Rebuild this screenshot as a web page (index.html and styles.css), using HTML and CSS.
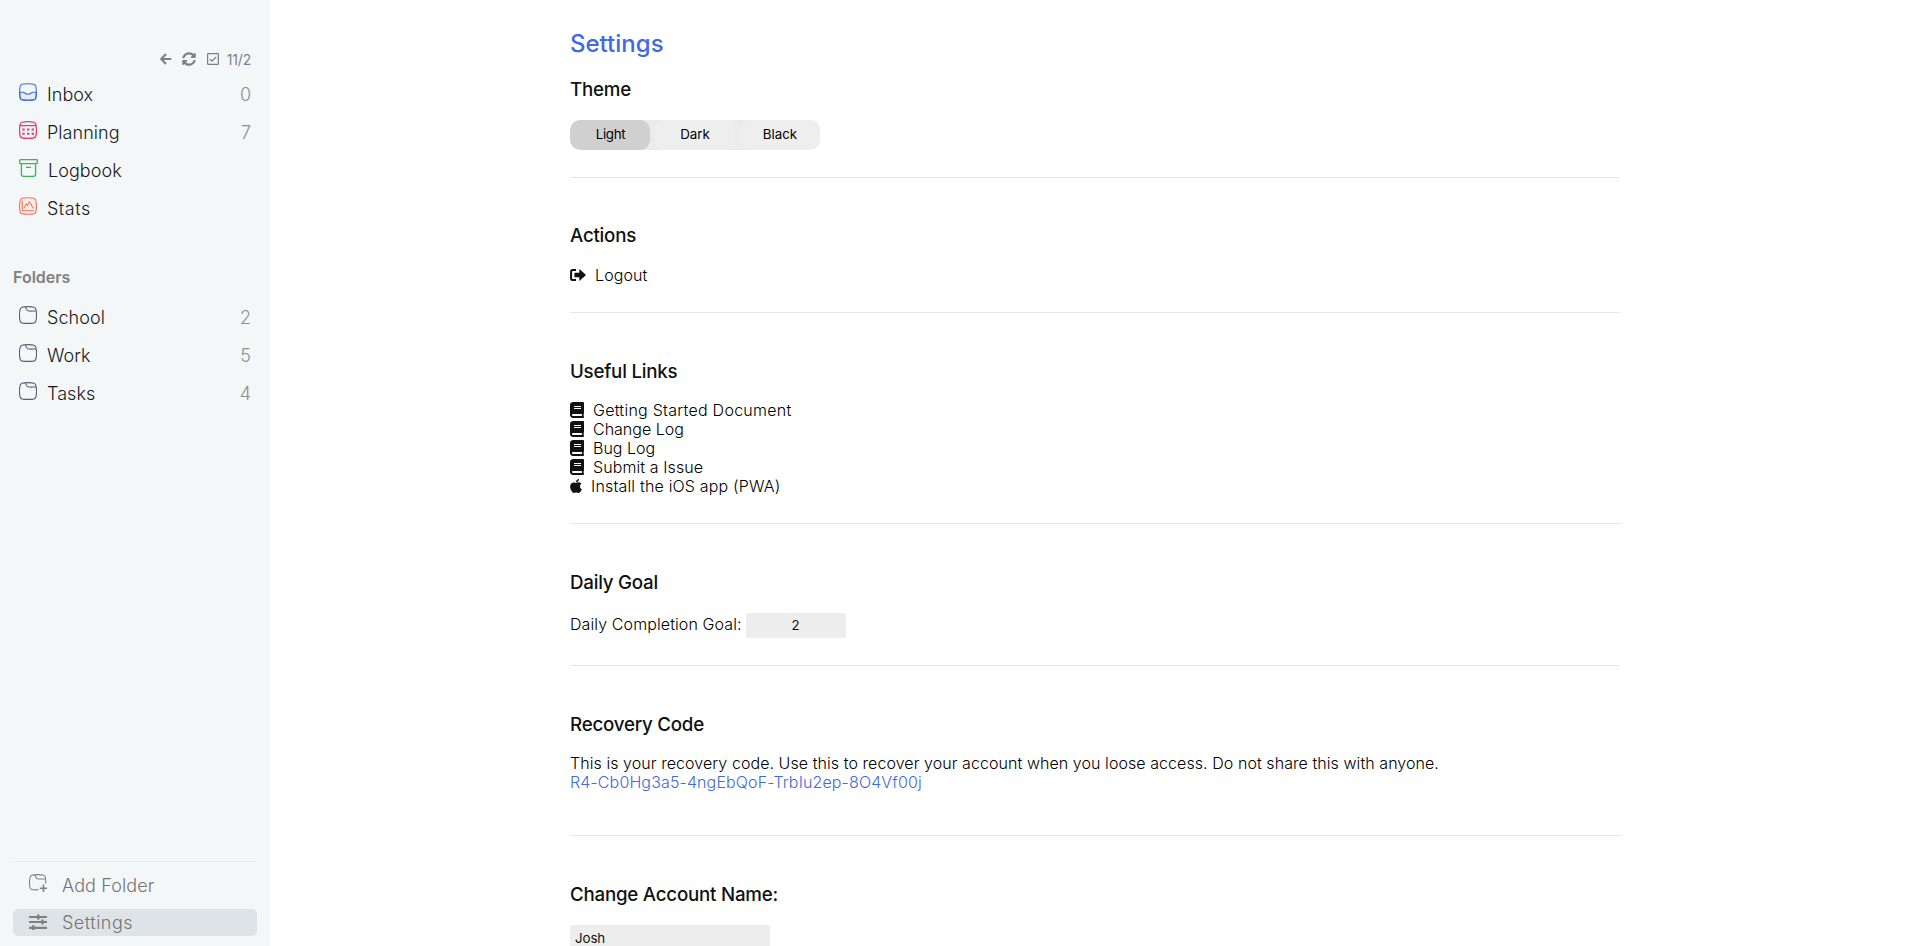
FILE: index.html
```html
<!DOCTYPE html>
<html lang="en">
<head>
<meta charset="utf-8">
<title>Settings</title>
<link rel="stylesheet" href="styles.css">
</head>
<body>
<svg class="defs" width="0" height="0">
  <symbol id="folder" viewBox="0 0 18 18"><path d="M9 .6C3 .6 1.700 1.200 1.100 3.500.4 6.500.4 12 1.100 15c.5 1.900 1.700 2.400 7.900 2.400s7.400-.5 7.900-2.400c.7-3 .7-8.500 0-11.500C16.300 1.200 15 .6 9 .6zM6 .8c1.200.8 1 3.200 3 4 1.700.6 5.200.1 8.200.2"/></symbol>
  <symbol id="book" viewBox="0 0 448 512"><path d="M448 360V24c0-13.300-10.700-24-24-24H96C43 0 0 43 0 96v320c0 53 43 96 96 96h328c13.300 0 24-10.700 24-24v-16c0-7.500-3.500-14.300-8.900-18.700-4.200-15.400-4.200-59.300 0-74.700 5.400-4.300 8.900-11.100 8.900-18.600zM128 134c0-3.300 2.700-6 6-6h212c3.300 0 6 2.700 6 6v20c0 3.300-2.700 6-6 6H134c-3.300 0-6-2.700-6-6v-20zm0 64c0-3.300 2.700-6 6-6h212c3.300 0 6 2.700 6 6v20c0 3.300-2.700 6-6 6H134c-3.300 0-6-2.700-6-6v-20zm253.400 250H96c-17.700 0-32-14.300-32-32 0-17.600 14.400-32 32-32h285.400c-1.900 17.100-1.900 46.900 0 64z"/></symbol>
</svg>
<div class="app">
  <aside class="sidebar">
    <div class="toolbar">
      <svg class="tool-arrow" viewBox="0 0 12 12"><path d="M6 1 1.200 6 6 11M1.500 6H11.300"/></svg>
      <svg class="tool-sync" viewBox="0 0 512 512"><path d="M370.720 133.280C339.458 104.008 298.888 87.962 255.848 88c-77.458.068-144.328 53.178-162.791 126.850-1.344 5.363-6.122 9.150-11.651 9.150H24.103c-7.498 0-13.194-6.807-11.807-14.176C33.933 94.924 134.813 8 256 8c66.448 0 126.791 26.136 171.315 68.685L463.030 40.970C478.149 25.851 504 36.559 504 57.941V192c0 13.255-10.745 24-24 24H345.941c-21.382 0-32.090-25.851-16.971-40.971l41.750-41.749zM32 296h134.059c21.382 0 32.090 25.851 16.971 40.971l-41.750 41.750c31.262 29.273 71.835 45.319 114.876 45.280 77.418-.070 144.315-53.144 162.787-126.849 1.344-5.363 6.122-9.150 11.651-9.150h57.304c7.498 0 13.194 6.807 11.807 14.176C478.067 417.076 377.187 504 256 504c-66.448 0-126.791-26.136-171.315-68.685L48.970 471.030C33.851 486.149 8 475.441 8 454.059V320c0-13.255 10.745-24 24-24z"/></svg>
      <svg class="tool-check" viewBox="0 0 12 12"><rect x=".6" y=".6" width="10.800" height="10.800" rx=".8"/><path d="M3 6.200 5 8.200 9.200 4"/></svg>
      <span class="progress">11/2</span>
    </div>
    <nav class="nav">
      <a class="item"><svg class="icon inbox" viewBox="0 0 18 18"><path class="tray" d="M.8 9.300h3.500c1.300 0 1.700 1.900 4.700 1.900s3.400-1.900 4.700-1.900h3.500c0 2.400-.1 4.300-.4 5.700-.5 1.800-1.700 2.300-7.800 2.300S1.700 16.800 1.200 15C.9 13.600.8 11.700.8 9.300z"/><path d="M9 .7C3 .7 1.700 1.200 1.200 3.500.5 6.500.5 12 1.200 15c.5 1.800 1.700 2.300 7.800 2.300s7.300-.5 7.800-2.300c.7-3 .7-8.500 0-11.500C16.300 1.200 15 .7 9 .7z"/></svg><span class="label">Inbox</span><span class="count">0</span></a>
      <a class="item"><svg class="icon planning" viewBox="0 0 18 18"><path d="M9 .7C3 .7 1.700 1.200 1.200 3.500.5 6.500.5 12 1.200 15c.5 1.800 1.700 2.300 7.800 2.300s7.300-.5 7.800-2.300c.7-3 .7-8.500 0-11.500C16.300 1.200 15 .7 9 .7zM1 4.700h16"/><path class="dots" d="M3.300 7.500h2.400v2H3.300zM8 7.500h2.400v2H8zM12.600 7.500H15v2h-2.400zM3.300 11.800h2.400v2H3.300zM8 11.800h2.400v2H8zM12.600 11.800H15v2h-2.400z"/></svg><span class="label">Planning</span><span class="count">7</span></a>
      <a class="item"><svg class="icon logbook" viewBox="0 0 19 18"><path d="M1.300.7h16.400q.6 0 .6.600v2.500q0 .9-.9.900H1.600q-.9 0-.9-.9V1.300q0-.6.6-.600zM2.400 4.700v10.500q0 2.100 2.100 2.100h10q2.100 0 2.100-2.100V4.700M7 8.300h5"/></svg><span class="label">Logbook</span></a>
      <a class="item"><svg class="icon stats" viewBox="0 0 18 18"><path d="M9 .7C3 .7 1.700 1.200 1.200 3.500.5 6.500.5 12 1.200 15c.5 1.800 1.700 2.300 7.800 2.300s7.300-.5 7.800-2.300c.7-3 .7-8.500 0-11.500C16.300 1.200 15 .7 9 .7z"/><path d="M3.300 3.800v9.900h11.800M4.700 11.500 7.200 7l1.500 1.200L10.300 5l1.900 2.200.9 2.300 1.400 1.800"/></svg><span class="label wide">Stats</span></a>
    </nav>
    <h2 class="folders-title">Folders</h2>
    <nav class="nav folders">
      <a class="item"><svg class="icon folder"><use href="#folder"/></svg><span class="label">School</span><span class="count">2</span></a>
      <a class="item"><svg class="icon folder"><use href="#folder"/></svg><span class="label">Work</span><span class="count">5</span></a>
      <a class="item"><svg class="icon folder"><use href="#folder"/></svg><span class="label">Tasks</span><span class="count">4</span></a>
    </nav>
    <div class="bottom">
      <a class="action add"><svg class="icon" viewBox="0 0 18 18"><path d="M16.700 9.500c0-2.500 0-4.500-.4-6.300C15.800 1.300 14.800.6 8.700.6S1.500 1.200 1 3.500c-.6 3-.6 7 0 10 .4 1.800 1.500 2.500 8.500 2.300M5.500.8c1.300.8 1 3.200 3 4 1.500.5 5 .1 7.900.2"/><path class="plus" d="M14.500 10.500v7.500M10.800 14.200h7.200"/></svg><span>Add Folder</span></a>
      <a class="action settings"><svg class="icon sliders" viewBox="0 0 18 16"><path class="bar" d="M0 3h18M0 8h18M0 13.800h18"/><path class="knob" d="M9.300.5v5M13.500 5.500v5M4.300 11.300v4.700"/></svg><span class="wide">Settings</span></a>
    </div>
  </aside>
  <main class="main">
    <div class="content">
      <h1 class="title">Settings</h1>
      <section class="section theme">
        <h3>Theme</h3>
        <div class="segmented"><button class="selected">Light</button><button>Dark</button><button>Black</button></div>
      </section>
      <section class="section actions">
        <h3>Actions</h3>
        <a class="link logout"><svg class="link-logout" viewBox="0 0 16 12"><path class="frame" d="M6 1.100H2.600Q1.100 1.100 1.100 2.600v6.800q0 1.500 1.500 1.500H6"/><path d="M5 3.700h4.300V.8q0-.9.700-.3l5.500 5q.5.500 0 1L10 11.500q-.7.600-.7-.3V8.300H5q-.6 0-.6-.6V4.300q0-.6.6-.6z"/></svg><span>Logout</span></a>
      </section>
      <section class="section links">
        <h3>Useful Links</h3>
        <a class="link guide"><svg class="link-book"><use href="#book"/></svg><span>Getting Started Document</span></a>
        <a class="link"><svg class="link-book"><use href="#book"/></svg><span>Change Log</span></a>
        <a class="link"><svg class="link-book"><use href="#book"/></svg><span>Bug Log</span></a>
        <a class="link issue"><svg class="link-book"><use href="#book"/></svg><span>Submit a Issue</span></a>
        <a class="link ios"><svg class="link-apple" viewBox="0 0 384 512"><path d="M318.700 268.700c-.2-36.700 16.400-64.400 50-84.800-18.800-26.900-47.200-41.700-84.700-44.600-35.500-2.800-74.300 20.700-88.500 20.700-15 0-49.400-19.700-76.400-19.700C63.300 141.200 4 184.800 4 273.500q0 39.300 14.400 81.200c12.800 36.700 59 126.700 107.200 125.200 25.200-.6 43-17.900 75.800-17.900 31.800 0 48.300 17.900 76.400 17.900 48.600-.7 90.400-82.500 102.600-119.300-65.200-30.700-61.700-90-61.700-91.900zm-56.600-164.200c27.300-32.400 24.800-61.900 24-72.500-24.100 1.400-52 16.400-67.900 34.900-17.500 19.800-27.800 44.300-25.600 71.900 26.100 2 49.900-11.400 69.500-34.300z"/></svg><span>Install the iOS app (PWA)</span></a>
      </section>
      <section class="section goal">
        <h3>Daily Goal</h3>
        <label class="goal-row"><span>Daily Completion Goal:</span><input type="text" value="2"></label>
      </section>
      <section class="section recovery">
        <h3>Recovery Code</h3>
        <p><span class="note">This is your recovery code. Use this to recover your account when you loose access. Do not share this with anyone.</span></p>
        <p><span class="code">R4-Cb0Hg3a5-4ngEbQoF-TrbIu2ep-8O4Vf00j</span></p>
      </section>
      <section class="section account">
        <h3>Change Account Name:</h3>
        <input class="name" type="text" value="Josh">
      </section>
    </div>
  </main>
</div>
</body>
</html>
```
FILE: styles.css
```css
* { box-sizing: border-box; }
body { margin: 0; font-family: Inter, "Liberation Sans", sans-serif; font-size: 16px; font-weight: 300; color: #000; background: #fff; }
h1, h2, h3, p { margin: 0; }
.defs { position: absolute; }
.app { display: flex; height: 946px; overflow: hidden; }

.sidebar { width: 270px; flex: none; background: #f3f7f8; padding: 48px 13px 10px; display: flex; flex-direction: column; }
.toolbar { display: flex; align-items: center; justify-content: flex-end; height: 22px; padding-right: 6px; color: #808080; font-size: 14px; font-weight: 400; letter-spacing: -0.2px; }
.toolbar svg { fill: none; stroke: #808080; }
.tool-arrow { width: 12px; height: 12px; stroke-width: 2.2; margin-right: 10px; }
.toolbar .tool-sync { width: 14px; height: 14px; fill: #808080; stroke: none; margin-right: 11px; }
.tool-check { width: 12px; height: 12px; stroke-width: 1.3; margin-right: 8px; }
.nav { padding-top: 12px; }
.item { display: flex; height: 38px; padding: 0 6px; color: #181818; font-size: 18px; }
.icon { width: 18px; height: 18px; flex: none; fill: none; stroke: #5b5f6b; stroke-width: 1.1; }
.item .icon { margin-top: 1px; margin-right: 10px; }
.label, .count { line-height: 26px; }
.label { letter-spacing: 0.05px; }
.wide { letter-spacing: 0.5px; }
.count { margin-left: auto; color: #8e8e8e; }
.inbox { stroke: #4169e1; }
.tray { fill: #e6edf9; }
.planning { stroke: #f0386b; stroke-width: 1.3; }
.planning .dots { fill: #f0386b; stroke: none; }
.item .logbook { width: 19px; stroke: #3cb654; stroke-width: 1.3; }
.stats { stroke: #fa6e57; fill: #fbefed; }
.folders-title { height: 24px; margin-top: 31px; font-size: 16px; line-height: 24px; font-weight: 600; color: #808080; }
.folders { padding-top: 16px; }
.bottom { margin-top: auto; border-top: 1px solid #e9edee; height: 75px; padding-top: 10px; color: #757575; font-size: 18px; }
.action { display: flex; height: 27px; line-height: 28px; padding-left: 16px; border-radius: 5px; }
.action .icon { margin-right: 15px; stroke: #808080; }
.add { margin-bottom: 10px; letter-spacing: 0.1px; }
.add .icon { margin-top: 2px; }
.plus { stroke-width: 1.6; }
.settings { background: #dee3e7; }
.settings .sliders { height: 16px; margin-top: 5px; }
.bar { stroke-width: 2.2; }
.knob { stroke-width: 2.4; }

.main { flex: 1; padding: 29px 0 0 300px; }
.content { width: 1050px; }
.title { font-size: 24px; line-height: 30px; font-weight: 500; color: #4169e1; margin-bottom: 18px; }
.section { border-bottom: 1px solid #e6e6e6; margin-bottom: 46px; }
h3 { font-size: 18.72px; line-height: 26px; height: 24px; font-weight: 500; letter-spacing: -0.22px; color: #111; }
.theme { height: 101px; margin-bottom: 45px; }
.segmented { display: flex; justify-content: space-between; width: 250px; height: 30px; margin-top: 19px; border-radius: 10px; background: #ebebeb; overflow: hidden; }
.segmented button { width: 80px; border: 0; padding: 0 0 2px; border-radius: 10px; background: #eee; font: 400 13.333px Inter, sans-serif; color: #000; }
.segmented .selected { background: #d0d0d0; padding-left: 1px; letter-spacing: -0.3px; }
.actions { height: 90px; }
.link { display: flex; height: 19px; line-height: 19px; }
.logout { margin-top: 19px; letter-spacing: 0.1px; }
.link-logout { width: 16px; height: 12px; margin: 3px 9px 0 0; fill: #111; }
.frame { fill: none; stroke: #111; stroke-width: 2; }
.links { height: 165px; }
.links h3 { margin-bottom: 18px; }
.guide { letter-spacing: 0.26px; }
.issue { letter-spacing: 0.1px; }
.ios { letter-spacing: 0.18px; }
.link-book { width: 14px; height: 16px; margin: 1px 9px 0 0; fill: #111; }
.link-apple { width: 12px; height: 16px; margin: 1px 9px 0 0; fill: #111; }
.goal { height: 96px; }
.goal-row { display: flex; height: 25px; margin-top: 19px; line-height: 23px; letter-spacing: 0.1px; }
input { border: 0; border-radius: 2px; background: #ededed; height: 25px; font: 400 13.333px Inter, sans-serif; color: #111; }
.goal-row input { width: 100px; margin-left: 4px; text-align: center; padding: 0 0 1px; }
.recovery { height: 124px; }
.recovery h3 { margin-bottom: 18px; }
.recovery p { line-height: 19px; }
.note { letter-spacing: 0.065px; }
.code { color: #4169e1; letter-spacing: 0.13px; }
.account { border: 0; }
.name { display: block; width: 200px; margin-top: 19px; padding: 0 5px; letter-spacing: -0.1px; }
```
